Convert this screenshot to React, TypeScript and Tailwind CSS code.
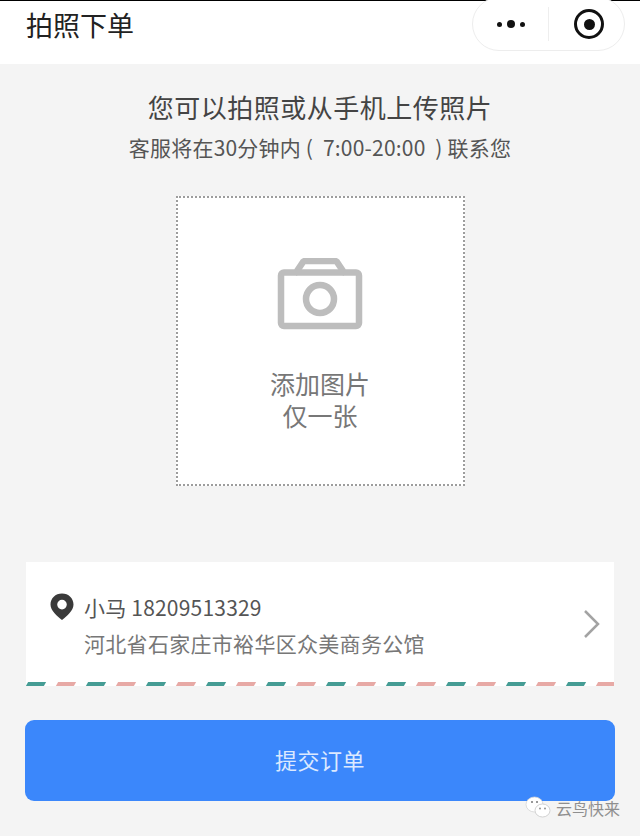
import React from "react";

const stripes = Array.from({ length: 20 }, (_, i) => i);

const CameraIcon = () => (
  <svg width="88" height="72" viewBox="0 0 88 72" fill="none" className="block">
    <path
      d="M5 17.5 a3 3 0 0 1 3 -3 H20 L27 4 a3 3 0 0 1 2 -1 H59 a3 3 0 0 1 2 1 L68 14.5 H80 a3 3 0 0 1 3 3 V65 a3 3 0 0 1 -3 3 H8 a3 3 0 0 1 -3 -3 Z"
      stroke="#bdbdbd"
      strokeWidth="6.5"
      strokeLinejoin="round"
    />
    <path d="M20 14.5 H68" stroke="#bdbdbd" strokeWidth="6.5" />
    <circle cx="44" cy="41" r="14" stroke="#bdbdbd" strokeWidth="6.5" />
  </svg>
);

const PinIcon = () => (
  <svg width="24" height="27" viewBox="0 0 24 27" className="block">
    <path
      fillRule="evenodd"
      d="M12 0.5 C5.4 0.5 0.5 5.4 0.5 11.5 C0.5 17.5 7 23 12 27 C17 23 23.5 17.5 23.5 11.5 C23.5 5.4 18.6 0.5 12 0.5 Z M12 6.8 a4.8 4.8 0 1 1 0 9.6 a4.8 4.8 0 0 1 0 -9.6 Z"
      fill="#3a3a3a"
    />
  </svg>
);

const WechatMark = () => (
  <svg width="26" height="23" viewBox="0 0 26 22" className="block">
    <ellipse cx="9.5" cy="8" rx="8.5" ry="7.5" fill="#fff" stroke="#d4d4d4" strokeWidth="0.8" />
    <ellipse cx="17.5" cy="14" rx="7.5" ry="6.5" fill="#fff" stroke="#c8c8c8" strokeWidth="0.8" />
    <circle cx="7" cy="5.5" r="1" fill="#777" />
    <circle cx="12" cy="5.5" r="1" fill="#777" />
    <circle cx="15" cy="12" r="0.9" fill="#888" />
    <circle cx="20" cy="12" r="0.9" fill="#888" />
  </svg>
);

export default function App() {
  return (
    <div className="relative flex h-[836px] w-[640px] flex-col overflow-hidden bg-[#f4f4f4] font-['Noto_Sans_CJK_SC','Noto_Sans',sans-serif]">
      {/* header */}
      <div className="flex h-[64px] shrink-0 items-start justify-between border-t border-black bg-white pl-[26px] pr-[15px]">
        <div className="mt-[5px] text-[27px] leading-[38px] text-[#222]">拍照下单</div>
        <div className="-mt-[4px] flex h-[54px] w-[153px] items-center rounded-[27px] border border-[#ededed] bg-white">
          <div className="flex h-[34px] w-[76px] items-center justify-center gap-[5px] border-r border-[#eeeeee]">
            <span className="h-[5px] w-[5px] rounded-full bg-[#111]" />
            <span className="h-[8px] w-[8px] rounded-full bg-[#111]" />
            <span className="h-[5px] w-[5px] rounded-full bg-[#111]" />
          </div>
          <div className="flex flex-1 items-center justify-center pl-[5px]">
            <div className="flex h-[30px] w-[30px] items-center justify-center rounded-full border-[3px] border-[#111]">
              <span className="h-[11px] w-[11px] rounded-full bg-[#111]" />
            </div>
          </div>
        </div>
      </div>

      {/* intro */}
      <div className="mt-[25px] text-center text-[26px] leading-[36px] tracking-[0.5px] text-[#444]">
        您可以拍照或从手机上传照片
      </div>
      <div className="mt-[7px] text-center text-[21px] leading-[30px] tracking-[0.2px] text-[#555]">
        客服将在30分钟内&nbsp;(&nbsp;&nbsp;7:00-20:00&nbsp;&nbsp;)&nbsp;联系您
      </div>

      {/* upload box */}
      <div className="mx-auto mt-[34px] flex h-[290px] w-[289px] flex-col items-center border-2 border-dotted border-[#9d9d9d] bg-white">
        <div className="mt-[60px]">
          <CameraIcon />
        </div>
        <div className="mt-[39px] text-center font-['Liberation_Sans','Noto_Sans_CJK_SC',sans-serif] text-[25px] leading-[32px] text-[#777]">
          <div>添加图片</div>
          <div>仅一张</div>
        </div>
      </div>

      {/* address */}
      <div className="mx-[26px] mt-[76px] bg-white">
        <div className="flex h-[120px] items-center pl-[24px] pr-[13px]">
          <div className="flex-1 pt-[5px]">
            <div className="flex items-center">
              <PinIcon />
              <span className="ml-[10px] text-[21px] leading-[30px] tracking-[0.2px] text-[#555]">小马 18209513329</span>
            </div>
            <div className="ml-[34px] mt-[6px] text-[21px] leading-[30px] tracking-[0.3px] text-[#777]">
              河北省石家庄市裕华区众美商务公馆
            </div>
          </div>
          <svg width="18" height="30" viewBox="0 0 18 30" fill="none" className="mt-[3px]">
            <path d="M2 2 L15 15 L2 28" stroke="#a3a3a3" strokeWidth="2.5" />
          </svg>
        </div>
        <div className="flex h-[4px] gap-[12px] overflow-hidden pl-px">
          {stripes.map((i) => (
            <span
              key={i}
              className={`h-[4px] w-[18px] shrink-0 -skew-x-[30deg] ${i % 2 === 0 ? "bg-[#459c94]" : "bg-[#e7a9a5]"}`}
            />
          ))}
        </div>
      </div>

      {/* submit */}
      <div className="mx-[25px] mt-[34px] flex h-[81px] items-center justify-center rounded-[9px] bg-[#3b87fb] pb-[2px] text-[22px] tracking-[0.5px] text-[#dce9ff]">
        提交订单
      </div>

      {/* watermark */}
      <div className="absolute right-[20px] bottom-[17px] flex items-center gap-[5px]">
        <WechatMark />
        <span className="text-[16px] leading-[20px] text-[#8f8f8f]">云鸟快来</span>
      </div>
    </div>
  );
}
